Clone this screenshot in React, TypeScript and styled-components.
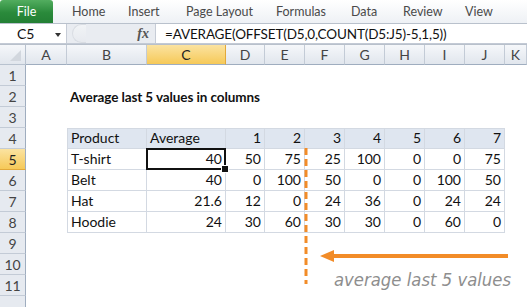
import React from "react";
import styled, { createGlobalStyle, css } from "styled-components";

const Global = createGlobalStyle`
  html, body { margin: 0; padding: 0; background: #fff; overflow: hidden; }
  body { font-family: "Lato", "Liberation Sans", sans-serif; }
  * { box-sizing: border-box; }
`;

const Page = styled.div`
  width: 527px;
  height: 307px;
  display: flex;
  flex-direction: column;
  overflow: hidden;
  position: relative;
`;

/* ---------- Ribbon tabs ---------- */
const TabBar = styled.div`
  height: 26px;
  display: flex;
  align-items: flex-end;
  background: linear-gradient(#ffffff, #eef1f5);
  border-bottom: 1px solid #b9c1cc;
  font-family: "Lato", "Liberation Sans", sans-serif;
  font-size: 12.5px;
  color: #4a4a4a;
`;

const FileTab = styled.div`
  width: 53px;
  height: 23px;
  margin-right: 19px;
  border-radius: 3px 3px 0 0;
  background: linear-gradient(#52ad5f, #2a8a3b 55%, #237f34);
  color: #fff;
  display: flex;
  align-items: center;
  justify-content: center;
  font-size: 12.5px;
`;

const Tab = styled.div<{ $w: number }>`
  height: 23px;
  width: ${(p) => p.$w}px;
  flex: none;
  display: flex;
  align-items: center;
`;

/* ---------- Formula bar ---------- */
const FormulaBar = styled.div`
  height: 21px;
  display: flex;
  background: #e9ecf1;
  border-bottom: 1px solid #c3cad5;
`;

const NameBox = styled.div`
  width: 67px;
  background: #fff;
  border-right: 1px solid #c6ccd6;
  display: flex;
  align-items: center;
  padding-left: 17px;
  font-size: 14px;
  color: #111;
  position: relative;
`;

const DropArrow = styled.span`
  position: absolute;
  right: 5px;
  top: 9px;
  width: 0;
  height: 0;
  border-left: 3.5px solid transparent;
  border-right: 3.5px solid transparent;
  border-top: 4px solid #333;
`;

const ButtonArea = styled.div`
  width: 88px;
  display: flex;
  align-items: center;
  padding-left: 5px;
  position: relative;
`;

const FadedPill = styled.div`
  width: 14px;
  height: 19px;
  border: 1px solid #d9dde3;
  border-right: none;
  border-radius: 10px 0 0 10px;
  background: linear-gradient(#f1f3f6, #e7eaef);
`;

const Fx = styled.span`
  margin-left: auto;
  margin-right: 6px;
  font-family: "Liberation Serif", "DejaVu Serif", serif;
  font-style: italic;
  font-weight: bold;
  font-size: 14px;
  color: #555;
`;

const FormulaInput = styled.div`
  flex: 1;
  background: #fff;
  border-left: 1px solid #c6ccd6;
  display: flex;
  align-items: center;
  padding-left: 9px;
  font-size: 13.5px;
  letter-spacing: -0.15px;
  color: #111;
  white-space: nowrap;
`;

const Spacer = styled.div`
  height: 4px;
  background: #e3e7ec;
  border-bottom: 1px solid #b8c0cb;
`;

/* ---------- Sheet ---------- */
const SheetWrap = styled.div`
  position: relative;
  flex: 1;
`;

const Sheet = styled.div`
  display: grid;
  grid-template-columns: 26px 41px 80px 79px 39px 40px 40px 40px 40px 40px 40px 1fr;
  grid-template-rows: 20px repeat(12, 21px);
  font-size: 14px;
  color: #111;
`;

const headerBg = css`
  background: linear-gradient(#f5f7fa, #e1e6ed);
  color: #444;
`;
const selectedBg = css`
  background: linear-gradient(#fbe3a1, #f6c958);
  color: #222;
`;

const Corner = styled.div`
  ${headerBg};
  border-right: 1px solid #b8c2cf;
  border-bottom: 1px solid #b8c2cf;
  position: relative;
  &::after {
    content: "";
    position: absolute;
    right: 4px;
    bottom: 3px;
    border-left: 11px solid transparent;
    border-bottom: 11px solid #d2d7de;
  }
`;

const ColHead = styled.div<{ $sel?: boolean }>`
  ${(p) => (p.$sel ? selectedBg : headerBg)};
  border-right: 1px solid ${(p) => (p.$sel ? "#e2a93a" : "#c3cbd6")};
  border-bottom: 1px solid #9fadbf;
  display: flex;
  align-items: center;
  justify-content: center;
  font-size: 14px;
`;

const RowHead = styled.div<{ $sel?: boolean }>`
  background: ${(p) => (p.$sel ? "linear-gradient(#fbe3a1, #f6c958)" : "#e6eaf0")};
  color: ${(p) => (p.$sel ? "#222" : "#444")};
  border-right: 1px solid #9fadbf;
  border-bottom: 1px solid ${(p) => (p.$sel ? "#e2a93a" : "#c3cbd6")};
  display: flex;
  align-items: center;
  justify-content: center;
  font-size: 14px;
`;

const Cell = styled.div<{
  $table?: boolean;
  $head?: boolean;
  $right?: boolean;
  $bold?: boolean;
  $first?: boolean;
  $top?: boolean;
  $sel?: boolean;
}>`
  position: relative;
  display: flex;
  align-items: flex-end;
  justify-content: ${(p) => (p.$right ? "flex-end" : "flex-start")};
  padding: 0 3px 1px 3px;
  white-space: nowrap;
  line-height: 18px;
  font-weight: ${(p) => (p.$bold ? 700 : 400)};
  ${(p) =>
    p.$table &&
    css`
      border-right: 1px solid #d3d9e2;
      border-bottom: 1px solid #d3d9e2;
    `}
  ${(p) => p.$first && css`border-left: 1px solid #d3d9e2;`}
  ${(p) => p.$top && css`border-top: 1px solid #d3d9e2;`}
  ${(p) => p.$head && css`background: #dfe6f0;`}
  ${(p) =>
    p.$sel &&
    css`
      &::after {
        content: "";
        position: absolute;
        left: -1px;
        top: -1px;
        right: -1px;
        bottom: -1px;
        border: 2px solid #111;
        pointer-events: none;
      }
      &::before {
        content: "";
        position: absolute;
        right: -4px;
        bottom: -4px;
        width: 6px;
        height: 6px;
        background: #111;
        border: 1px solid #fff;
        z-index: 2;
      }
    `}
`;

const Title = styled(Cell)`
  font-size: 13.5px;
  letter-spacing: -0.1px;
`;

const Overlay = styled.svg`
  position: absolute;
  left: 0;
  top: 0;
  pointer-events: none;
`;

const COLS = ["A", "B", "C", "D", "E", "F", "G", "H", "I", "J", "K"];

const table: (string | number)[][] = [
  ["Product", "Average", 1, 2, 3, 4, 5, 6, 7],
  ["T-shirt", 40, 50, 75, 25, 100, 0, 0, 75],
  ["Belt", 40, 0, 100, 50, 0, 0, 100, 50],
  ["Hat", 21.6, 12, 0, 24, 36, 0, 24, 24],
  ["Hoodie", 24, 30, 60, 30, 30, 0, 60, 0],
];

const tabs: [string, number][] = [
  ["Home", 56],
  ["Insert", 58],
  ["Page Layout", 90],
  ["Formulas", 75],
  ["Data", 52],
  ["Review", 62],
  ["View", 40],
];

export default function App() {
  const rows: React.ReactNode[] = [];
  for (let r = 1; r <= 12; r++) {
    rows.push(
      <RowHead key={`rh${r}`} $sel={r === 5}>
        {r < 12 ? r : ""}
      </RowHead>
    );
    COLS.forEach((c, ci) => {
      const key = `${c}${r}`;
      const tr = r - 4;
      const tc = ci - 1;
      const inTable = tr >= 0 && tr < 5 && tc >= 0 && tc < 9;
      if (inTable) {
        const v = table[tr][tc];
        rows.push(
          <Cell
            key={key}
            $table
            $head={tr === 0}
            $right={typeof v === "number"}
            $first={tc === 0}
            $top={tr === 0}
            $sel={r === 5 && c === "C"}
          >
            {v}
          </Cell>
        );
      } else if (r === 2 && c === "B") {
        rows.push(
          <Title key={key} $bold>
            Average last 5 values in columns
          </Title>
        );
      } else {
        rows.push(<Cell key={key} />);
      }
    });
  }

  return (
    <Page>
      <Global />
      <TabBar>
        <FileTab>File</FileTab>
        {tabs.map(([t, w]) => (
          <Tab key={t} $w={w}>
            {t}
          </Tab>
        ))}
      </TabBar>
      <FormulaBar>
        <NameBox>
          C5
          <DropArrow />
        </NameBox>
        <ButtonArea>
          <FadedPill />
          <Fx>fx</Fx>
        </ButtonArea>
        <FormulaInput>=AVERAGE(OFFSET(D5,0,COUNT(D5:J5)-5,1,5))</FormulaInput>
      </FormulaBar>
      <Spacer />
      <SheetWrap>
        <Sheet>
          <Corner />
          {COLS.map((c) => (
            <ColHead key={c} $sel={c === "C"}>
              {c}
            </ColHead>
          ))}
          {rows}
        </Sheet>
        <Overlay width={527} height={255} viewBox="0 52 527 255">
          <line x1={306} y1={155} x2={306} y2={291} stroke="#f28c28" strokeWidth={3} strokeDasharray="7 4" />
          <line x1={330} y1={263} x2={508} y2={263} stroke="#f28c28" strokeWidth={4} />
          <polygon points="320,263 334,257 334,269" fill="#f28c28" />
          <text
            x={334}
            y={293}
            fill="#8e8e8e"
            fontFamily="DejaVu Sans, sans-serif"
            fontStyle="italic"
            fontSize={17}
            textLength={177}
            lengthAdjust="spacingAndGlyphs"
          >
            average last 5 values
          </text>
        </Overlay>
      </SheetWrap>
    </Page>
  );
}
